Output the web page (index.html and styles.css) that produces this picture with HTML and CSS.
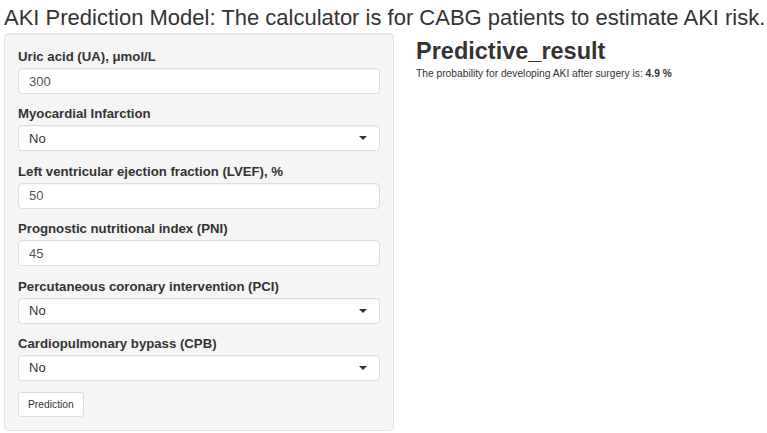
FILE: index.html
```html
<!DOCTYPE html>
<html lang="en">
<head>
  <meta charset="UTF-8">
  <meta name="viewport" content="width=device-width, initial-scale=1.0">
  <title>AKI Prediction Model</title>
  <link rel="stylesheet" href="styles.css">
</head>
<body>
  <h2 class="title">AKI Prediction Model: The calculator is for CABG patients to estimate AKI risk.</h2>

  <div class="layout">
    <form class="sidebar">
      <div class="field">
        <label for="ua">Uric acid (UA), μmol/L</label>
        <input type="number" id="ua" value="300">
      </div>

      <div class="field">
        <label for="mi">Myocardial Infarction</label>
        <div class="select"><select id="mi"><option>No</option><option>Yes</option></select></div>
      </div>

      <div class="field">
        <label for="lvef">Left ventricular ejection fraction (LVEF), %</label>
        <input type="number" id="lvef" value="50">
      </div>

      <div class="field">
        <label for="pni">Prognostic nutritional index (PNI)</label>
        <input type="number" id="pni" value="45">
      </div>

      <div class="field">
        <label for="pci">Percutaneous coronary intervention (PCI)</label>
        <div class="select"><select id="pci"><option>No</option><option>Yes</option></select></div>
      </div>

      <div class="field">
        <label for="cpb">Cardiopulmonary bypass (CPB)</label>
        <div class="select"><select id="cpb"><option>No</option><option>Yes</option></select></div>
      </div>

      <button type="button">Prediction</button>
    </form>

    <div class="main">
      <h3>Predictive_result</h3>
      <p>The probability for developing AKI after surgery is: <b>4.9 %</b></p>
    </div>
  </div>
</body>
</html>
```

FILE: styles.css
```css
body {
  margin: 0;
  padding: 0 4px;
  font-family: "Liberation Sans", Arial, sans-serif;
  color: #333;
  background: #fff;
}
.title {
  margin: 0;
  padding-top: 5px;
  font-size: 22px;
  font-weight: normal;
  line-height: 26px;
  height: 28px;
  white-space: nowrap;
}
.layout {
  display: flex;
  align-items: flex-start;
}
.sidebar {
  width: 362px;
  padding: 14px 13px 13px;
  background: #f5f5f5;
  border: 1px solid #e3e3e3;
  border-radius: 4px;
  box-shadow: inset 0 1px 1px rgba(0, 0, 0, 0.05);
}
.field {
  margin-bottom: 11.4px;
}
.field label {
  display: block;
  font-size: 13.2px;
  font-weight: bold;
  line-height: 18px;
  margin-bottom: 2px;
}
.field input,
.field select {
  display: block;
  box-sizing: border-box;
  width: 100%;
  height: 26px;
  padding: 0 10px;
  font-family: inherit;
  font-size: 13px;
  color: #555;
  background: #fff;
  border: 1px solid #ddd;
  border-radius: 4px;
  box-shadow: inset 0 1px 1px rgba(0, 0, 0, 0.04);
  -moz-appearance: textfield;
  appearance: none;
}
.field input::-webkit-inner-spin-button {
  -webkit-appearance: none;
}
.field select {
  color: #333;
}
.select {
  position: relative;
}
/* dropdown caret */
.select::after {
  content: "";
  position: absolute;
  right: 13px;
  top: 11px;
  border-left: 4px solid transparent;
  border-right: 4px solid transparent;
  border-top: 4px solid #333;
  pointer-events: none;
}
button {
  display: block;
  height: 25px;
  padding: 0 9px;
  font-family: inherit;
  font-size: 10.3px;
  color: #333;
  background: #fff;
  border: 1px solid #ddd;
  border-radius: 3px;
}
.main {
  padding-left: 22px;
}
.main h3 {
  margin: 3px 0 0;
  font-size: 23.5px;
  line-height: 30px;
  font-weight: bold;
}
.main p {
  margin: 2px 0 0;
  font-size: 10.25px;
}
```
